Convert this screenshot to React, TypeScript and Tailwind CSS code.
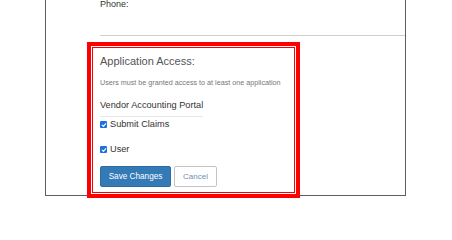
import React from "react";

function Check() {
  return (
    <span className="flex h-[7px] w-[7px] shrink-0 items-center justify-center rounded-[1px] bg-[#1f72dc]">
      <svg viewBox="0 0 10 10" className="h-[6px] w-[6px]">
        <path d="M2 5.2 L4.1 7.3 L8 2.8" fill="none" stroke="#fff" strokeWidth="1.8" strokeLinecap="round" strokeLinejoin="round" />
      </svg>
    </span>
  );
}

export default function App() {
  return (
    <div className="relative h-[218px] w-[452px] overflow-hidden bg-white font-['Liberation_Sans',Arial,sans-serif]">
      <div className="ml-[45px] w-[361px] border-b-[1.5px] border-l-[1.5px] border-r-[1.5px] border-[#5e5e5e] pb-[7.5px] pl-[54px]">
        <div className="mt-[-1.5px] h-[11px] text-[9px] leading-[11px] text-[#333]">Phone:</div>
        <div className="mt-[25px] h-px bg-[#cfcfcf]" />
        <div className="mt-[19px] text-[11px] leading-[13px] text-[#555]">Application Access:</div>
        <div className="mt-[10.5px] text-[7.2px] leading-[9px] text-[#777]">
          Users must be granted access to at least one application
        </div>
        <div className="mt-[13.3px] w-fit border-b border-[#e8e8e8] pb-[5.2px] text-[9.2px] leading-[11px] text-[#333]">
          Vendor Accounting Portal
        </div>
        <div className="mt-[1.8px] flex items-center gap-[3px] text-[9.2px] leading-[11px] text-[#333]">
          <Check />
          <span>Submit Claims</span>
        </div>
        <div className="mt-[14px] flex items-center gap-[3px] text-[9.2px] leading-[11px] text-[#333]">
          <Check />
          <span>User</span>
        </div>
        <div className="mt-[11.2px] flex gap-[3px]">
          <button className="flex h-[21px] w-[71px] items-center justify-center rounded-[2px] border border-[#2e6da4] bg-[#337ab7] text-[8.2px] text-white">
            Save Changes
          </button>
          <button className="flex h-[21px] w-[43px] items-center justify-center rounded-[2px] border border-[#c4c4c4] bg-white text-[8px] text-[#6f8fb3]">
            Cancel
          </button>
        </div>
      </div>
      <div className="absolute left-[87px] top-[42px] h-[156px] w-[213px] border-[4px] border-[#ff0000]">
        <div className="absolute inset-[1px] border border-[#ff0000]" />
      </div>
    </div>
  );
}
